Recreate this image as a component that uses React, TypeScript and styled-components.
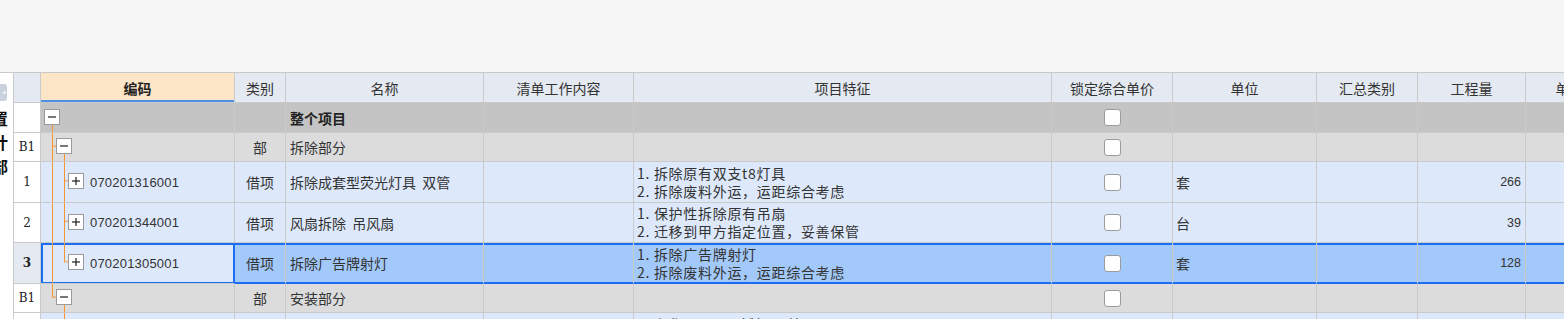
import React from 'react';
import styled, { createGlobalStyle, css } from 'styled-components';

const GlobalStyle = createGlobalStyle`
  html, body { margin: 0; padding: 0; background: #ffffff; overflow: hidden; }
  body {
    font-family: "Noto Sans CJK SC", "Noto Sans", sans-serif;
    color: #333333;
  }
  * { box-sizing: border-box; }
`;

const COLS = '27px 194px 51px 198px 150px 418px 121px 144px 101px 108px 88px';
const GRID_LINE = '#cacaca';
const BLUE = '#1b6ef3';
const ORANGE = '#f7952f';

type Kind = 'root' | 'group' | 'item';
type Guide = 'pipe' | 'tee' | 'elbow' | 'blank';

interface RowData {
  no: string;
  kind: Kind;
  level: number;
  guides: Guide[];
  open?: boolean;
  expander: '-' | '+';
  code?: string;
  cat?: string;
  name?: string;
  bold?: boolean;
  features?: string[];
  unit?: string;
  qty?: string;
  height: number;
  selected?: boolean;
}

const rows: RowData[] = [
  { no: '', kind: 'root', level: 0, guides: [], open: true, expander: '-', name: '整个项目', bold: true, height: 30 },
  { no: 'B1', kind: 'group', level: 1, guides: ['tee'], open: true, expander: '-', cat: '部', name: '拆除部分', height: 29 },
  {
    no: '1', kind: 'item', level: 2, guides: ['pipe', 'tee'], expander: '+', code: '070201316001', cat: '借项',
    name: '拆除成套型荧光灯具  双管', features: ['1. 拆除原有双支t8灯具', '2. 拆除废料外运，运距综合考虑'], unit: '套', qty: '266', height: 41,
  },
  {
    no: '2', kind: 'item', level: 2, guides: ['pipe', 'tee'], expander: '+', code: '070201344001', cat: '借项',
    name: '风扇拆除  吊风扇', features: ['1. 保护性拆除原有吊扇', '2. 迁移到甲方指定位置，妥善保管'], unit: '台', qty: '39', height: 40,
  },
  {
    no: '3', kind: 'item', level: 2, guides: ['pipe', 'elbow'], expander: '+', code: '070201305001', cat: '借项',
    name: '拆除广告牌射灯', features: ['1. 拆除广告牌射灯', '2. 拆除废料外运，运距综合考虑'], unit: '套', qty: '128', height: 41, selected: true,
  },
  { no: 'B1', kind: 'group', level: 1, guides: ['elbow'], open: true, expander: '-', cat: '部', name: '安装部分', height: 29 },
  {
    no: '1', kind: 'item', level: 2, guides: ['blank', 'tee'], expander: '+', code: '030412001001', cat: '借项',
    name: '普通灯具', features: ['1. 名称：LED平板灯 双管', '2. 安装方式：吸顶安装'], unit: '套', qty: '266', height: 41,
  },
];

const bgFor = (kind: Kind, selected?: boolean) => {
  if (selected) return '#a2c9fa';
  if (kind === 'root') return '#c4c4c4';
  if (kind === 'group') return '#dcdcdc';
  return '#dde9fb';
};

/* ---------- layout ---------- */

const Page = styled.div`
  width: 1564px;
  height: 319px;
  display: flex;
  flex-direction: column;
  overflow: hidden;
`;

const TopBar = styled.div`
  height: 73px;
  flex: none;
  background: #f6f6f6;
  border-bottom: 1px solid #c9c9c9;
`;

const Body = styled.div`
  flex: 1;
  display: flex;
  min-height: 0;
`;

const SidePanel = styled.div`
  width: 14px;
  flex: none;
  background: #ffffff;
  border-right: 1px solid #c9c9c9;
  overflow: hidden;
  display: flex;
  flex-direction: column;
  padding-top: 11px;
`;

const ToggleTab = styled.div`
  width: 7px;
  height: 17px;
  flex: none;
  background: #c9d1de;
  border-radius: 0 3px 3px 0;
  display: flex;
  align-items: center;
  justify-content: flex-end;
  padding-right: 1px;
  &::after {
    content: '';
    width: 3px;
    height: 3px;
    border-radius: 50%;
    background: #f2f4f8;
  }
`;

const VerticalLabel = styled.div`
  display: flex;
  flex-direction: column;
  margin-left: -8px;
  margin-top: 5px;
  font-size: 16px;
  font-weight: 700;
  line-height: 24px;
  color: #111111;
`;

const Sheet = styled.div`
  flex: 1;
  display: flex;
  flex-direction: column;
  overflow: hidden;
  min-width: 0;
`;

const Row = styled.div<{ $h: number; $bg: string }>`
  display: grid;
  grid-template-columns: ${COLS};
  height: ${(p) => p.$h}px;
  flex: none;
  background: ${(p) => p.$bg};
`;

const HeaderCell = styled.div<{ $active?: boolean }>`
  display: flex;
  align-items: center;
  justify-content: center;
  border-right: 1px solid ${GRID_LINE};
  border-bottom: 1px solid ${GRID_LINE};
  background: ${(p) => (p.$active ? '#fde5c7' : '#e4e9f2')};
  font-size: 14px;
  color: #333333;
  white-space: nowrap;
  overflow: hidden;
  ${(p) =>
    p.$active &&
    css`
      font-weight: 700;
      color: #222222;
      box-shadow: inset 0 -2px 0 #4a90e6;
    `}
`;

const Cell = styled.div<{ $align?: 'left' | 'center' | 'right'; $sel?: boolean; $active?: boolean; $bg?: string }>`
  position: relative;
  display: flex;
  align-items: center;
  justify-content: ${(p) => (p.$align === 'center' ? 'center' : p.$align === 'right' ? 'flex-end' : 'flex-start')};
  border-right: 1px solid ${GRID_LINE};
  border-bottom: 1px solid ${GRID_LINE};
  font-size: 14px;
  color: #333333;
  white-space: nowrap;
  overflow: hidden;
  ${(p) => p.$bg && css`background: ${p.$bg};`}
  ${(p) =>
    p.$sel &&
    css`
      border-bottom-color: ${BLUE};
      box-shadow: inset 0 2px 0 ${BLUE}, inset 0 -1px 0 ${BLUE};
    `}
  ${(p) =>
    p.$active &&
    css`
      border-right-color: ${BLUE};
      box-shadow: inset 0 2px 0 ${BLUE}, inset 0 -1px 0 ${BLUE}, inset 2px 0 0 ${BLUE}, inset -1px 0 0 ${BLUE};
    `}
`;

const RowNumCell = styled.div<{ $sel?: boolean }>`
  display: flex;
  align-items: center;
  justify-content: center;
  border-right: 1px solid ${GRID_LINE};
  border-bottom: 1px solid ${GRID_LINE};
  background: ${(p) => (p.$sel ? '#e4e9f2' : '#ffffff')};
  font-family: "DejaVu Serif", "Liberation Serif", serif;
  font-size: 12px;
  font-weight: ${(p) => (p.$sel ? 700 : 400)};
  color: #222222;
`;

const NameText = styled.span<{ $bold?: boolean }>`
  padding-left: 4px;
  white-space: pre;
  font-weight: ${(p) => (p.$bold ? 700 : 400)};
  color: ${(p) => (p.$bold ? '#222222' : '#333333')};
`;

const Features = styled.div`
  padding-left: 3px;
  display: flex;
  flex-direction: column;
  font-size: 14px;
  line-height: 18px;
  letter-spacing: 0.7px;
  color: #333333;
  margin-top: -1px;
`;

const UnitText = styled.span`
  padding-left: 3px;
`;

const QtyText = styled.span`
  padding-right: 4px;
  font-family: "Liberation Sans", Arial, sans-serif;
  font-size: 12.5px;
  color: #333333;
`;

const CodeText = styled.span`
  margin-left: 6px;
  font-family: "Liberation Sans", Arial, sans-serif;
  font-size: 13px;
  letter-spacing: 0.2px;
  color: #333333;
  position: relative;
`;

const ExpandBox = styled.span<{ $level: number }>`
  position: relative;
  z-index: 1;
  flex: none;
  width: 16px;
  height: 16px;
  margin-left: ${(p) => 3 + 12 * p.$level}px;
  margin-top: -2px;
  border: 1px solid #9b9b9b;
  background: #ffffff;
  display: flex;
  align-items: center;
  justify-content: center;
`;

const TreeSvg = styled.svg`
  position: absolute;
  left: 0;
  top: 0;
  width: 100%;
  height: 100%;
  pointer-events: none;
`;

const CheckBox = styled.span`
  width: 17px;
  height: 17px;
  border: 1px solid #9c9c9c;
  border-radius: 3px;
  background: #ffffff;
`;

/* ---------- parts ---------- */

const Sign: React.FC<{ plus: boolean }> = ({ plus }) => (
  <svg width="10" height="10" viewBox="0 0 10 10">
    <line x1="1" y1="5" x2="9" y2="5" stroke="#1e1e1e" strokeWidth="1.2" />
    {plus && <line x1="5" y1="1" x2="5" y2="9" stroke="#1e1e1e" strokeWidth="1.2" />}
  </svg>
);

const TreeLines: React.FC<{ row: RowData }> = ({ row }) => {
  const gx = (i: number) => 11.5 + 12 * i;
  const parts: React.ReactNode[] = [];
  row.guides.forEach((g, i) => {
    const x = gx(i);
    if (g === 'pipe' || g === 'tee') {
      parts.push(<line key={`v${i}`} x1={x} x2={x} y1="0" y2="100%" stroke={ORANGE} strokeWidth="1" />);
    }
    if (g === 'elbow') {
      parts.push(<line key={`v${i}`} x1={x} x2={x} y1="0" y2="47%" stroke={ORANGE} strokeWidth="1" />);
    }
    if (g === 'tee' || g === 'elbow') {
      parts.push(<line key={`h${i}`} x1={x - 0.5} x2={x + 7} y1="47%" y2="47%" stroke={ORANGE} strokeWidth="1" />);
    }
  });
  if (row.open) {
    const x = gx(row.level);
    parts.push(<line key="open" x1={x} x2={x} y1="50%" y2="100%" stroke={ORANGE} strokeWidth="1" />);
  }
  return <TreeSvg>{parts}</TreeSvg>;
};

const headers = ['', '编码', '类别', '名称', '清单工作内容', '项目特征', '锁定综合单价', '单位', '汇总类别', '工程量', '单价'];

const DataRow: React.FC<{ row: RowData }> = ({ row }) => {
  const sel = row.selected;
  return (
    <Row $h={row.height} $bg={bgFor(row.kind, sel)}>
      <RowNumCell $sel={sel}>{row.no}</RowNumCell>
      <Cell $active={sel} $bg={sel ? '#dde9fb' : undefined}>
        <TreeLines row={row} />
        <ExpandBox $level={row.level}>
          <Sign plus={row.expander === '+'} />
        </ExpandBox>
        {row.code && <CodeText>{row.code}</CodeText>}
      </Cell>
      <Cell $align="center" $sel={sel}>{row.cat}</Cell>
      <Cell $sel={sel}>
        <NameText $bold={row.bold}>{row.name}</NameText>
      </Cell>
      <Cell $sel={sel} />
      <Cell $sel={sel}>
        {row.features && (
          <Features>
            {row.features.map((f) => (
              <span key={f}>{f}</span>
            ))}
          </Features>
        )}
      </Cell>
      <Cell $align="center" $sel={sel}>
        <CheckBox />
      </Cell>
      <Cell $sel={sel}>{row.unit && <UnitText>{row.unit}</UnitText>}</Cell>
      <Cell $sel={sel} />
      <Cell $align="right" $sel={sel}>{row.qty && <QtyText>{row.qty}</QtyText>}</Cell>
      <Cell $sel={sel} />
    </Row>
  );
};

export default function App() {
  return (
    <>
      <GlobalStyle />
      <Page>
        <TopBar />
        <Body>
          <SidePanel>
            <ToggleTab />
            <VerticalLabel>
              <span>置</span>
              <span>计</span>
              <span>部</span>
            </VerticalLabel>
          </SidePanel>
          <Sheet>
            <Row $h={30} $bg="#e4e9f2">
              {headers.map((h, i) => (
                <HeaderCell key={i} $active={i === 1}>
                  {h}
                </HeaderCell>
              ))}
            </Row>
            {rows.map((r, i) => (
              <DataRow key={i} row={r} />
            ))}
          </Sheet>
        </Body>
      </Page>
    </>
  );
}
